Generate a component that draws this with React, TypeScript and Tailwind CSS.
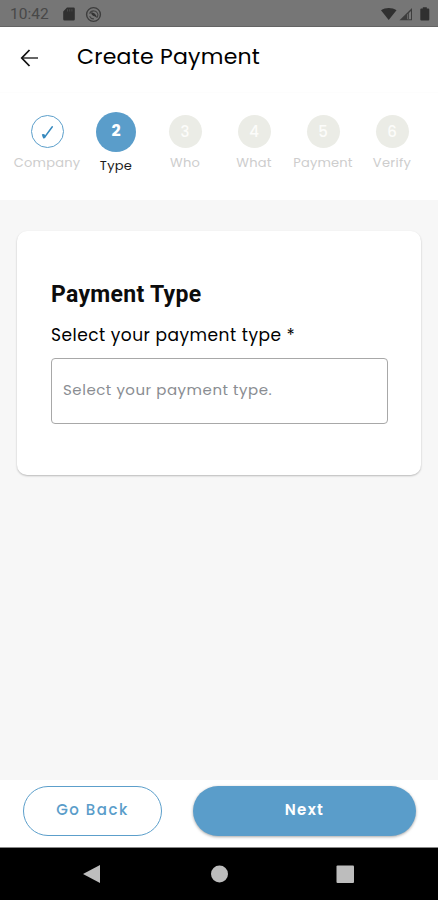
const poppins = "font-['Poppins','Inter',sans-serif]";

const steps = [
  { n: 1, label: "Company", track: "tracking-[0.2px]" },
  { n: 2, label: "Type", track: "tracking-[0.3px]" },
  { n: 3, label: "Who", track: "tracking-[0.2px]" },
  { n: 4, label: "What", track: "tracking-[0.2px]" },
  { n: 5, label: "Payment", track: "tracking-[0.2px]" },
  { n: 6, label: "Verify", track: "tracking-[0.3px]" },
];

function StatusBar() {
  return (
    <div className="flex h-[27px] items-center border-b border-[#646464] bg-[#767676] pt-[3px] pl-[10px] pr-[8px] text-[#3a3a3a]">
      <span className="w-[40px] font-[Roboto,sans-serif] text-[15.5px] leading-none text-[#484848]">10:42</span>
      <svg className="ml-[13px] -mt-px" width="12" height="14" viewBox="0 0 12 14">
        <path d="M4 .5h6.500a1.300 1.300 0 0 1 1.300 1.300v10.400a1.300 1.300 0 0 1-1.300 1.300h-9A1.300 1.300 0 0 1 .2 12.200V4.500z" fill="#303030" />
        <path d="M4.500 2.200v2.300M6.700 2.200v2.300M8.900 2.200v2.300" stroke="#484848" strokeWidth="1" />
      </svg>
      <svg className="ml-[10px] -mt-px" width="17" height="17" viewBox="0 0 17 17" fill="none">
        <circle cx="8.500" cy="8.500" r="6.900" stroke="#3d3d3d" strokeWidth="1.400" />
        <path d="M4.600 7.800A4.300 4.300 0 0 1 12.900 8.500c0 1.300-.4 2.400-1 3.200M4.600 10.300a4.300 4.300 0 0 0 4.400 2.500" stroke="#424242" strokeWidth="1.100" />
        <path d="M6 6.500c2.700-.3 5.500 1.900 6 5.300L9.500 10.300C8.200 10.300 6.500 9 6 6.500z" fill="#333" />
      </svg>
      <svg className="ml-auto -mt-px" width="50" height="16" viewBox="0 0 50 16">
        <path d="M1 4.300C5.500 1.200 12 1.200 16.500 4.300L8.700 14z" fill="#303030" />
        <path d="M32 2V14.300H19.500z" fill="#3d3d3d" />
        <path d="M27.300 8.500L31 5v8.200h-3.700z" fill="#777" />
        <path d="M28.500 7v6" stroke="#484848" strokeWidth="1" />
        <path d="M41.500 2.500V1.200h4v1.300H47a1 1 0 0 1 1 1V13.500a1 1 0 0 1-1 1h-7a1 1 0 0 1-1-1V3.500a1 1 0 0 1 1-1z" fill="#303030" transform="translate(1.300 0)" />
      </svg>
    </div>
  );
}

function Step({ n, label, track }: { n: number; label: string; track: string }) {
  const active = n === 2;
  return (
    <div className="flex flex-col items-center">
      <div className={`flex h-[40px] items-center ${active ? "" : "pb-[2px]"}`}>
        {n === 1 ? (
          <div className="flex size-[33px] items-center justify-center rounded-full border-[1.5px] border-[#5c9fcb] pt-[3px]">
            <svg width="13" height="15" viewBox="0 0 13 15" fill="none">
              <path d="M2.200 10.800L3.800 12 11.300 1.800" stroke="#3789be" strokeWidth="1.500" strokeLinecap="round" />
              <path d="M.8 9.300l2.400-.2 1.500 2.500-.9 1.600-1.600.3z" fill="#3789be" />
            </svg>
          </div>
        ) : active ? (
          <div className="flex size-[40px] items-center justify-center rounded-full bg-[#5a9dca] pb-[2px] text-[16px] leading-none font-bold text-white">2</div>
        ) : (
          <div className="flex size-[33px] items-center justify-center rounded-full bg-[#ebece6] text-[15px] leading-none font-medium text-[#fcfcfa]">{n}</div>
        )}
      </div>
      <span className={`text-[13px] leading-[18px] whitespace-nowrap ${track} ${active ? "mt-[5px] text-[#1c1c1c]" : "mt-[2px] text-[#cdcdcd]"}`}>{label}</span>
    </div>
  );
}

export default function App() {
  return (
    <div className={`flex h-[900px] w-[438px] flex-col overflow-hidden bg-[#f7f7f7] text-black ${poppins}`}>
      <StatusBar />
      <header className="flex h-[65px] items-center bg-white pb-[6px] pl-[20px]">
        <svg className="mt-[2px]" width="19" height="18" viewBox="0 0 19 18" fill="none">
          <path d="M2 9h16" stroke="#555" strokeWidth="1.800" />
          <path d="M9.500 1L1.800 9l7.700 8" stroke="#111" strokeWidth="1.800" />
        </svg>
        <h1 className="ml-[38px] text-[22px] leading-[30px] tracking-[0.25px]">Create Payment</h1>
      </header>
      <nav className="grid h-[108px] grid-cols-[repeat(6,69px)] content-start border-t border-[#fdfdfd] bg-white pt-[19px] pl-[12.5px]">
        {steps.map((s) => <Step key={s.n} {...s} />)}
      </nav>
      <main className="flex-1 px-[17px] pt-[31px]">
        <section className="h-[244px] rounded-[10px] bg-white px-[34px] pt-[49px] shadow-[0_1px_2px_rgba(0,0,0,0.25)]">
          <h2 className="font-[Roboto,sans-serif] text-[23px] leading-[30px] font-bold tracking-[0.3px] text-[#0c0c0c]">Payment Type</h2>
          <p className="mt-[13px] text-[17px] leading-[24px] tracking-[0.5px]">Select your payment type *</p>
          <div className="mt-[11px] flex h-[66px] w-[337px] items-center rounded-[4px] border border-[#a8a8a8] pb-[2px] pl-[11px] text-[15px] tracking-[0.53px] text-[#8a8d92]">Select your payment type.</div>
        </section>
      </main>
      <footer className="flex h-[67px] bg-white px-[23px] pt-[6px]">
        <button className="flex h-[50px] w-[139px] shrink-0 items-center justify-center rounded-full border-[1.5px] border-[#5c9fcb] pb-[2px] text-[15px] font-medium tracking-[1.5px] text-[#5a9dca]">Go Back</button>
        <button className="ml-[31px] flex h-[50px] w-[223px] shrink-0 items-center justify-center rounded-full bg-[#5a9dca] pb-[2px] text-[15px] font-semibold tracking-[1.3px] text-white shadow-[0_1px_3px_rgba(0,0,0,0.35)]">Next</button>
      </footer>
      <div className="h-[53px] border-t border-[#888] bg-black">
        <svg width="438" height="52" viewBox="0 0 438 52" fill="#bdbdbd">
          <path d="M83 26l17-9v18z" />
          <circle cx="219.500" cy="26" r="8.500" />
          <rect x="336.500" y="17.500" width="17.500" height="17.500" rx="1" />
        </svg>
      </div>
    </div>
  );
}
